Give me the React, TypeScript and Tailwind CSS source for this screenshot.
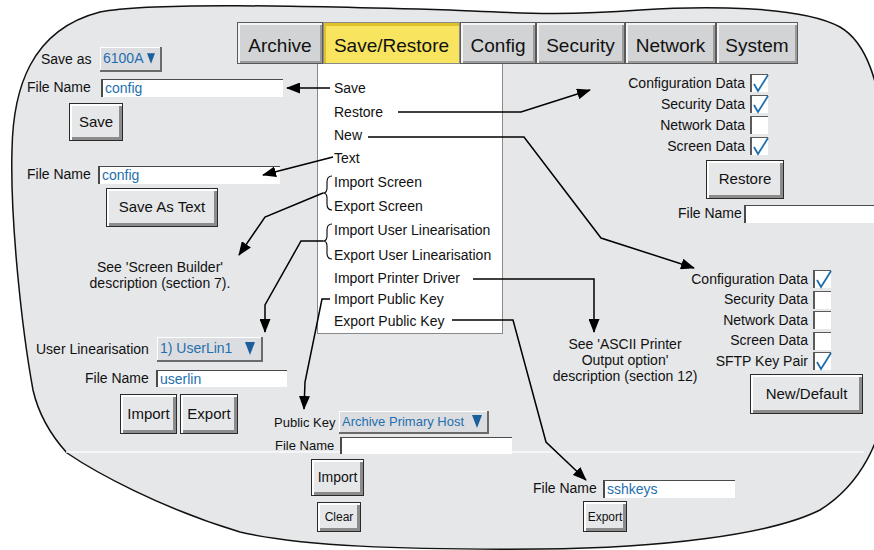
import React from "react";

const font = "font-['Liberation_Sans',Arial,Helvetica,sans-serif]";

const Input = ({ className, children }: { className: string; children?: React.ReactNode }) => (
  <div
    className={`flex items-center bg-white border-l-2 border-t border-[#4a4a4a] pl-[2px] leading-none text-[#1f6fae] ${className}`}
  >
    {children}
  </div>
);

const Arrow = ({ w, h }: { w: string; h: string }) => (
  <svg className={`${w} ${h} shrink-0`} viewBox="0 0 10 13">
    <polygon points="0,0 10,0 5,13" fill="#1a5f9c" />
  </svg>
);

const Dropdown = ({ className, children }: { className: string; children: React.ReactNode }) => (
  <div
    className={`flex items-center justify-between bg-[#dcdde0] border-r-2 border-b-2 border-[#6a6a6a] shadow-[inset_1px_1px_0_#ffffff] pl-[3px] pr-[5px] text-[#1f6fae] ${className}`}
  >
    {children}
  </div>
);

const Button = ({ className, children }: { className: string; children: React.ReactNode }) => (
  <div
    className={`absolute flex items-center justify-center border border-[#2a2a2a] bg-[#e6e7e9] text-[#111] shadow-[inset_2px_2px_0_#ffffff,inset_-3px_-3px_0_#8c8c8c] ${className}`}
  >
    {children}
  </div>
);

const Check = ({ on }: { on?: boolean }) => (
  <div className="relative w-[18px] h-[18px] shrink-0 bg-white border-l-2 border-t border-[#5a5a5a]">
    {on && (
      <svg className="absolute left-0 top-[-2px] w-[18px] h-[20px]" viewBox="0 0 18 20">
        <polyline points="2,11 6,18 16,2" fill="none" stroke="#1f6fae" strokeWidth="1.8" />
      </svg>
    )}
  </div>
);

const CheckRow = ({ label, on }: { label: string; on?: boolean }) => (
  <div className="flex h-[18px] items-center justify-end gap-[5px] text-[14px] text-[#111]">
    <span>{label}</span>
    <Check on={on} />
  </div>
);

const tabs = [
  { name: "Archive", w: "w-[86px]" },
  { name: "Save/Restore", w: "w-[137px]", active: true },
  { name: "Config", w: "w-[76px]" },
  { name: "Security", w: "w-[89px]" },
  { name: "Network", w: "w-[91px]" },
  { name: "System", w: "w-[82px]" },
];

const menu = [
  { t: "Save", h: "h-[24px]" },
  { t: "Restore", h: "h-[24px]" },
  { t: "New", h: "h-[23px]" },
  { t: "Text", h: "h-[23px]" },
  { t: "Import Screen", h: "h-[24px]" },
  { t: "Export Screen", h: "h-[24px]" },
  { t: "Import User Linearisation", h: "h-[25px]" },
  { t: "Export User Linearisation", h: "h-[24px]" },
  { t: "Import Printer Driver", h: "h-[22px]" },
  { t: "Import Public Key", h: "h-[21px]" },
  { t: "Export Public Key", h: "h-[22px]" },
];

export default function App() {
  return (
    <div className={`relative w-[874px] h-[550px] overflow-hidden bg-white text-[#111] ${font}`}>
      {/* outline of the screen */}
      <svg className="absolute inset-0" width="874" height="550">
        <path
          d="M33 390 C22 330 10 220 12 150 C13 90 30 30 100 12 C150 2 300 6 450 10 C520 13 560 16 640 10 C700 6 800 5 840 27 C866 42 880 80 886 150 L886 390 C884 440 860 485 820 510 C770 535 660 548 540 549 C400 550 300 546 240 532 C160 508 95 472 67 453 C48 432 38 412 33 390 Z"
          fill="#e6e7e9"
          stroke="#111"
          strokeWidth="1.5"
        />
        <line x1="66" y1="452" x2="864" y2="452" stroke="#fbfbfb" strokeWidth="1.5" />
      </svg>

      {/* tabs */}
      <div className="absolute left-[237px] top-[22px] flex h-[42px]">
        {tabs.map((t) => (
          <div
            key={t.name}
            className={
              t.active
                ? `${t.w} flex items-center justify-center pt-[6px] border border-[#8a8a8a] bg-[#f8e45e] text-[19px] shadow-[inset_0_3px_0_#e0c12a,inset_2px_0_0_#e0c12a]`
                : `${t.w} flex items-center justify-center pt-[6px] border border-[#5a5a5a] bg-[#d2d3d5] text-[19px] shadow-[inset_2px_2px_0_#f4f4f4,inset_-2px_-2px_0_#9a9a9a]`
            }
          >
            {t.name}
          </div>
        ))}
      </div>

      {/* drop-down menu */}
      <div className="absolute left-[317px] top-[64px] w-[186px] h-[270px] bg-white border-x border-b border-[#8a8a8a] pt-[12px] pl-[16px] text-[14px]">
        {menu.map((m) => (
          <div key={m.t} className={`${m.h} flex items-center`}>
            {m.t}
          </div>
        ))}
      </div>

      {/* save */}
      <div className="absolute left-[41px] top-[47px] flex h-[25px] items-center text-[14px]">
        <span className="w-[59px]">Save as</span>
        <Dropdown className="w-[62px] h-[25px] text-[14px]">
          <span>6100A</span>
          <Arrow w="w-[8px]" h="h-[11px]" />
        </Dropdown>
      </div>
      <div className="absolute left-[27px] top-[77px] flex items-center text-[14px]">
        <span className="w-[74px]">File Name</span>
        <Input className="w-[182px] h-[18px] text-[14px]">config</Input>
      </div>
      <Button className="left-[69px] top-[103px] w-[54px] h-[38px] text-[15px]">Save</Button>

      {/* save as text */}
      <div className="absolute left-[27px] top-[164px] flex items-center text-[14px]">
        <span className="w-[71px]">File Name</span>
        <Input className="w-[182px] h-[18px] text-[14px]">config</Input>
      </div>
      <Button className="left-[106px] top-[188px] w-[112px] h-[39px] text-[15px]">Save As Text</Button>

      <div className="absolute left-[50px] top-[259px] w-[220px] text-center text-[14px] leading-[16px]">
        <div>See 'Screen Builder'</div>
        <div>description (section 7).</div>
      </div>

      {/* user linearisation */}
      <div className="absolute left-[36px] top-[337px] flex h-[25px] items-center text-[14px]">
        <span className="w-[121px]">User Linearisation</span>
        <Dropdown className="w-[106px] h-[25px] text-[14px]">
          <span>1) UserLin1</span>
          <Arrow w="w-[12px]" h="h-[13px]" />
        </Dropdown>
      </div>
      <div className="absolute left-[85px] top-[368px] flex items-center text-[14px]">
        <span className="w-[71px]">File Name</span>
        <Input className="w-[131px] h-[17px] text-[14px]">userlin</Input>
      </div>
      <Button className="left-[120px] top-[394px] w-[57px] h-[40px] text-[15px]">Import</Button>
      <Button className="left-[180px] top-[394px] w-[58px] h-[40px] text-[15px]">Export</Button>

      {/* public key */}
      <div className="absolute left-[274px] top-[411px] flex h-[23px] items-center text-[13px]">
        <span className="w-[65px]">Public Key</span>
        <Dropdown className="w-[150px] h-[23px] text-[13px]">
          <span>Archive Primary Host</span>
          <Arrow w="w-[10px]" h="h-[13px]" />
        </Dropdown>
      </div>
      <div className="absolute left-[275px] top-[436px] flex items-center text-[13px]">
        <span className="w-[65px]">File Name</span>
        <Input className="w-[172px] h-[17px] text-[13px]" />
      </div>
      <Button className="left-[311px] top-[459px] w-[53px] h-[37px] text-[14px]">Import</Button>
      <Button className="left-[317px] top-[502px] w-[44px] h-[30px] text-[12px]">Clear</Button>

      {/* export public key */}
      <div className="absolute left-[533px] top-[478px] flex items-center text-[14px]">
        <span className="w-[70px]">File Name</span>
        <Input className="w-[132px] h-[18px] text-[14px]">sshkeys</Input>
      </div>
      <Button className="left-[583px] top-[501px] w-[44px] h-[31px] text-[12px]">Export</Button>

      {/* restore */}
      <div className="absolute left-[580px] top-[74px] w-[188px] flex flex-col gap-[3px]">
        <CheckRow label="Configuration Data" on />
        <CheckRow label="Security Data" on />
        <CheckRow label="Network Data" />
        <CheckRow label="Screen Data" on />
      </div>
      <Button className="left-[706px] top-[160px] w-[78px] h-[39px] text-[15px]">Restore</Button>
      <div className="absolute left-[678px] top-[203px] flex items-center text-[14px]">
        <span className="w-[66px]">File Name</span>
        <Input className="w-[140px] h-[18px] text-[14px]" />
      </div>

      {/* new */}
      <div className="absolute left-[620px] top-[270px] w-[211px] flex flex-col gap-[2.5px]">
        <CheckRow label="Configuration Data" on />
        <CheckRow label="Security Data" />
        <CheckRow label="Network Data" />
        <CheckRow label="Screen Data" />
        <CheckRow label="SFTP Key Pair" on />
      </div>
      <Button className="left-[750px] top-[374px] w-[113px] h-[40px] text-[15px]">New/Default</Button>

      <div className="absolute left-[535px] top-[336px] w-[180px] text-center text-[14px] leading-[16px]">
        <div>See 'ASCII Printer</div>
        <div>Output option'</div>
        <div>description (section 12)</div>
      </div>

      {/* arrows */}
      <svg className="absolute inset-0 pointer-events-none" width="874" height="550">
        <defs>
          <marker id="ah" markerUnits="userSpaceOnUse" markerWidth="14" markerHeight="11" refX="13" refY="5.5" orient="auto">
            <path d="M0,0 L14,5.5 L0,11 z" fill="#000" />
          </marker>
        </defs>
        <g fill="none" stroke="#000" strokeWidth="1.5">
          <polyline points="330,88 287,88" markerEnd="url(#ah)" />
          <polyline points="398,112 521,112 590,90" markerEnd="url(#ah)" />
          <polyline points="368,137 524,137 601,238 694,268" markerEnd="url(#ah)" />
          <polyline points="333,157 263,175" markerEnd="url(#ah)" />
          <polyline points="323,193 265,217 239,255" markerEnd="url(#ah)" />
          <polyline points="323,241 301,241 265,305 265,332" markerEnd="url(#ah)" />
          <polyline points="473,279 594,279 594,332" markerEnd="url(#ah)" />
          <polyline points="330,299 322,299 305,382 304,409" markerEnd="url(#ah)" />
          <polyline points="452,320 513,320 546,442 586,480" markerEnd="url(#ah)" />
        </g>
        <g fill="none" stroke="#000" strokeWidth="1.1">
          <path d="M332 176 Q327 176 327 182 L327 188 Q327 193 323 193 Q327 193 327 198 L327 204 Q327 210 332 210" />
          <path d="M332 224 Q327 224 327 230 L327 236 Q327 241 323 241 Q327 241 327 246 L327 253 Q327 259 332 259" />
        </g>
      </svg>
    </div>
  );
}
